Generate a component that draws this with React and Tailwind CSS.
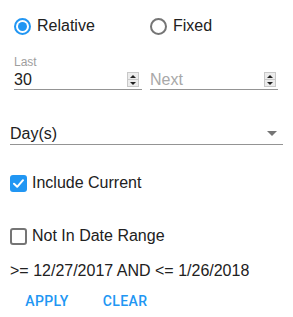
import { useState } from "react"

const Radio=({checked})=>{
  return checked?(
    <span className="flex h-[17px] w-[17px] items-center justify-center rounded-full border-2 border-[#2196f3]">
      <span className="h-[9px] w-[9px] rounded-full bg-[#2196f3]"></span>
    </span>
  ):(
    <span className="h-[17px] w-[17px] rounded-full border-2 border-[#757575]"></span>
  )
}

const Check=({checked})=>{
  return checked?(
    <span className="flex h-[17px] w-[17px] items-center justify-center rounded-[3px] bg-[#2196f3]">
      <svg width="13" height="13" viewBox="0 0 13 13" fill="none">
        <path d="M2 6.8 L5.2 9.8 L11 3.2" stroke="white" strokeWidth="2" strokeLinecap="round" strokeLinejoin="round"/>
      </svg>
    </span>
  ):(
    <span className="h-[17px] w-[17px] rounded-[3px] border-2 border-[#757575]"></span>
  )
}

const Spinner=()=>(
  <span className="flex h-[15px] w-[12px] flex-col border border-[#c8c8c8] bg-[#ececec]">
    <span className="flex flex-1 items-center justify-center border-b border-[#c8c8c8]">
      <span className="h-0 w-0 border-x-[3px] border-b-[3px] border-x-transparent border-b-[#222]"></span>
    </span>
    <span className="flex flex-1 items-center justify-center">
      <span className="h-0 w-0 border-x-[3px] border-t-[3px] border-x-transparent border-t-[#222]"></span>
    </span>
  </span>
)

const App=()=>{
  const [mode,setMode]=useState("relative")
  const [last,setLast]=useState("30")
  const [includeCurrent,setIncludeCurrent]=useState(true)
  const [notInRange,setNotInRange]=useState(false)

  return(
    <div className="h-[317px] w-[293px] bg-white px-[10px] text-[16px] text-[#212121]" style={{fontFamily:'"Liberation Sans", Arial, sans-serif'}}>
      <div className="pt-[14px] pl-1 grid grid-cols-[128px_128px] gap-x-2">
        <label className="flex h-6 cursor-pointer items-center gap-[6px]" onClick={()=>setMode("relative")}>
          <Radio checked={mode==="relative"}/>
          <span>Relative</span>
        </label>
        <label className="flex h-6 cursor-pointer items-center gap-[6px]" onClick={()=>setMode("fixed")}>
          <Radio checked={mode==="fixed"}/>
          <span>Fixed</span>
        </label>

        <div className="mt-[17px]">
          <div className="h-[15px] text-[12px] leading-[14px] text-[#9e9e9e]">Last</div>
          <div className="flex h-[20px] items-center justify-between border-b border-[#949494]">
            <input value={last} onChange={(e)=>setLast(e.target.value)} className="w-[100px] bg-transparent outline-none"/>
            <span className="mr-[3px]"><Spinner/></span>
          </div>
        </div>
        <div className="mt-[17px]">
          <div className="h-[15px]"></div>
          <div className="flex h-[20px] items-center justify-between border-b border-[#949494]">
            <input placeholder="Next" className="w-[100px] bg-transparent outline-none placeholder-[#a8a8a8]"/>
            <span className="mr-[2px]"><Spinner/></span>
          </div>
        </div>
      </div>

      <div className="mt-[33px] flex h-[22px] items-center justify-between border-b border-[#949494]">
        <span>Day(s)</span>
        <span className="mr-[6px] h-0 w-0 border-x-[5px] border-t-[5px] border-x-transparent border-t-[#757575]"></span>
      </div>

      <label className="mt-[29px] flex h-[18px] cursor-pointer items-center gap-[5px]" onClick={()=>setIncludeCurrent(!includeCurrent)}>
        <Check checked={includeCurrent}/>
        <span>Include Current</span>
      </label>

      <label className="mt-[35px] flex h-[18px] cursor-pointer items-center gap-[5px]" onClick={()=>setNotInRange(!notInRange)}>
        <Check checked={notInRange}/>
        <span>Not In Date Range</span>
      </label>

      <div className="mt-[17px] h-[18px] leading-[18px]">&gt;= 12/27/2017 AND &lt;= 1/26/2018</div>

      <div className="mt-[12px] flex h-[18px] items-center text-[14px] font-medium tracking-[0.4px] text-[#2196f3]" style={{fontFamily:'Roboto, sans-serif'}}>
        <button className="w-[74px] text-center">APPLY</button>
        <button className="ml-1 w-[74px] text-center">CLEAR</button>
      </div>
    </div>
  )
}

export default App
